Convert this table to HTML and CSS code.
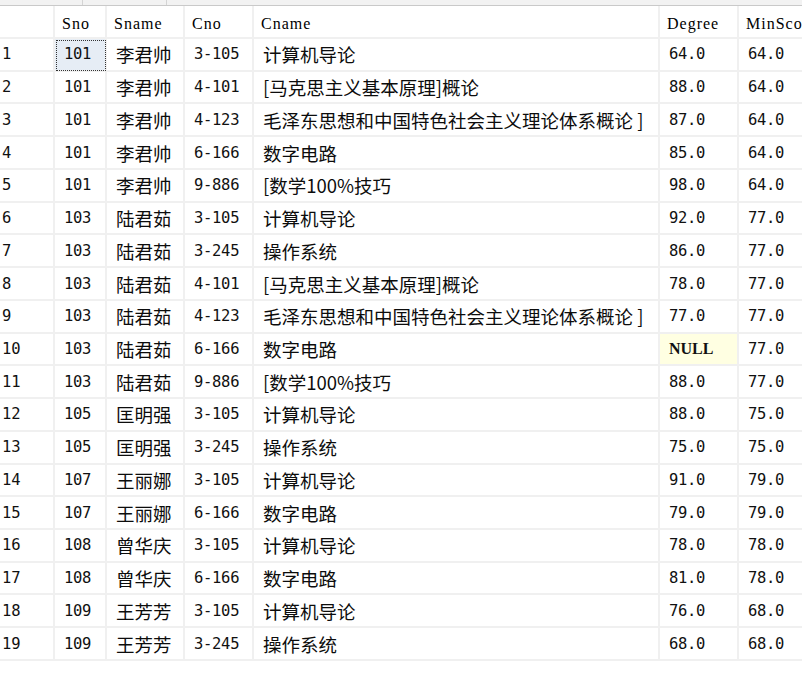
FILE: index.html
```html
<!DOCTYPE html>
<html lang="zh">
<head>
<meta charset="utf-8">
<title>Results</title>
<link rel="stylesheet" href="styles.css">
</head>
<body>
<div class="topbar">
  <span class="tab t1"></span><span class="tab t2"></span><span class="tab t3"></span>
</div>
<div class="grid">
  <div class="c hd rn"></div>
  <div class="c hd">Sno</div>
  <div class="c hd">Sname</div>
  <div class="c hd">Cno</div>
  <div class="c hd">Cname</div>
  <div class="c hd">Degree</div>
  <div class="c hd">MinScore</div>

  <div class="c rn">1</div><div class="c num sel">101</div><div class="c cjk">李君帅</div><div class="c num">3-105</div><div class="c cjk">计算机导论</div><div class="c num">64.0</div><div class="c num">64.0</div>
  <div class="c rn">2</div><div class="c num">101</div><div class="c cjk">李君帅</div><div class="c num">4-101</div><div class="c cjk">[马克思主义基本原理]概论</div><div class="c num">88.0</div><div class="c num">64.0</div>
  <div class="c rn">3</div><div class="c num">101</div><div class="c cjk">李君帅</div><div class="c num">4-123</div><div class="c cjk">毛泽东思想和中国特色社会主义理论体系概论 ]</div><div class="c num">87.0</div><div class="c num">64.0</div>
  <div class="c rn">4</div><div class="c num">101</div><div class="c cjk">李君帅</div><div class="c num">6-166</div><div class="c cjk">数字电路</div><div class="c num">85.0</div><div class="c num">64.0</div>
  <div class="c rn">5</div><div class="c num">101</div><div class="c cjk">李君帅</div><div class="c num">9-886</div><div class="c cjk">[数学100%技巧</div><div class="c num">98.0</div><div class="c num">64.0</div>
  <div class="c rn">6</div><div class="c num">103</div><div class="c cjk">陆君茹</div><div class="c num">3-105</div><div class="c cjk">计算机导论</div><div class="c num">92.0</div><div class="c num">77.0</div>
  <div class="c rn">7</div><div class="c num">103</div><div class="c cjk">陆君茹</div><div class="c num">3-245</div><div class="c cjk">操作系统</div><div class="c num">86.0</div><div class="c num">77.0</div>
  <div class="c rn">8</div><div class="c num">103</div><div class="c cjk">陆君茹</div><div class="c num">4-101</div><div class="c cjk">[马克思主义基本原理]概论</div><div class="c num">78.0</div><div class="c num">77.0</div>
  <div class="c rn">9</div><div class="c num">103</div><div class="c cjk">陆君茹</div><div class="c num">4-123</div><div class="c cjk">毛泽东思想和中国特色社会主义理论体系概论 ]</div><div class="c num">77.0</div><div class="c num">77.0</div>
  <div class="c rn">10</div><div class="c num">103</div><div class="c cjk">陆君茹</div><div class="c num">6-166</div><div class="c cjk">数字电路</div><div class="c null">NULL</div><div class="c num">77.0</div>
  <div class="c rn">11</div><div class="c num">103</div><div class="c cjk">陆君茹</div><div class="c num">9-886</div><div class="c cjk">[数学100%技巧</div><div class="c num">88.0</div><div class="c num">77.0</div>
  <div class="c rn">12</div><div class="c num">105</div><div class="c cjk">匡明强</div><div class="c num">3-105</div><div class="c cjk">计算机导论</div><div class="c num">88.0</div><div class="c num">75.0</div>
  <div class="c rn">13</div><div class="c num">105</div><div class="c cjk">匡明强</div><div class="c num">3-245</div><div class="c cjk">操作系统</div><div class="c num">75.0</div><div class="c num">75.0</div>
  <div class="c rn">14</div><div class="c num">107</div><div class="c cjk">王丽娜</div><div class="c num">3-105</div><div class="c cjk">计算机导论</div><div class="c num">91.0</div><div class="c num">79.0</div>
  <div class="c rn">15</div><div class="c num">107</div><div class="c cjk">王丽娜</div><div class="c num">6-166</div><div class="c cjk">数字电路</div><div class="c num">79.0</div><div class="c num">79.0</div>
  <div class="c rn">16</div><div class="c num">108</div><div class="c cjk">曾华庆</div><div class="c num">3-105</div><div class="c cjk">计算机导论</div><div class="c num">78.0</div><div class="c num">78.0</div>
  <div class="c rn">17</div><div class="c num">108</div><div class="c cjk">曾华庆</div><div class="c num">6-166</div><div class="c cjk">数字电路</div><div class="c num">81.0</div><div class="c num">78.0</div>
  <div class="c rn">18</div><div class="c num">109</div><div class="c cjk">王芳芳</div><div class="c num">3-105</div><div class="c cjk">计算机导论</div><div class="c num">76.0</div><div class="c num">68.0</div>
  <div class="c rn">19</div><div class="c num">109</div><div class="c cjk">王芳芳</div><div class="c num">3-245</div><div class="c cjk">操作系统</div><div class="c num">68.0</div><div class="c num">68.0</div>
</div>
</body>
</html>
```
FILE: styles.css
```css
html, body {
  margin: 0;
  padding: 0;
  background: #ffffff;
  overflow: hidden;
  width: 802px;
  height: 675px;
}

.topbar {
  height: 5px;
  background: #f2f2f2;
  border-bottom: 1px solid #c9c9c9;
  display: flex;
}

.tab {
  display: block;
  height: 5px;
  border-right: 1px solid #d4d4d4;
}
.t1 { width: 82px; }
.t2 { width: 83px; }
.t3 { flex: 1; border-right: none; }

.grid {
  display: grid;
  grid-template-columns: 55px 52px 78px 69px 406px 79px 100px;
  grid-template-rows: 33px;
  grid-auto-rows: 32.74px;
  width: 839px;
}

.c {
  box-sizing: border-box;
  border-right: 2px solid #f0f0f0;
  border-bottom: 2px solid #f0f0f0;
  display: flex;
  align-items: center;
  padding: 0 0 0 9px;
  white-space: nowrap;
  overflow: hidden;
  color: #111;
}

.hd {
  font-family: "Liberation Serif", "DejaVu Serif", serif;
  font-size: 16px;
  letter-spacing: 1px;
  color: #000;
  padding-left: 7px;
  padding-top: 5px;
}

.rn {
  font-family: "DejaVu Sans Mono", "Liberation Mono", monospace;
  font-size: 15.5px;
  letter-spacing: 0;
  padding-left: 2px;
  color: #111;
}

.num {
  font-family: "DejaVu Sans Mono", "Liberation Mono", monospace;
  font-size: 15.5px;
  letter-spacing: -0.3px;
}

.cjk {
  font-family: "Noto Sans CJK SC", "Noto Sans", sans-serif;
  font-size: 18.5px;
  color: #0c0c0c;
}

.sel {
  background: #e6edf5;
  outline: 1px dotted #333;
  outline-offset: -2px;
}

.null {
  background: #ffffe2;
  font-family: "Liberation Serif", "DejaVu Serif", serif;
  font-size: 16px;
  font-weight: bold;
  letter-spacing: 0;
  color: #111;
}
```
